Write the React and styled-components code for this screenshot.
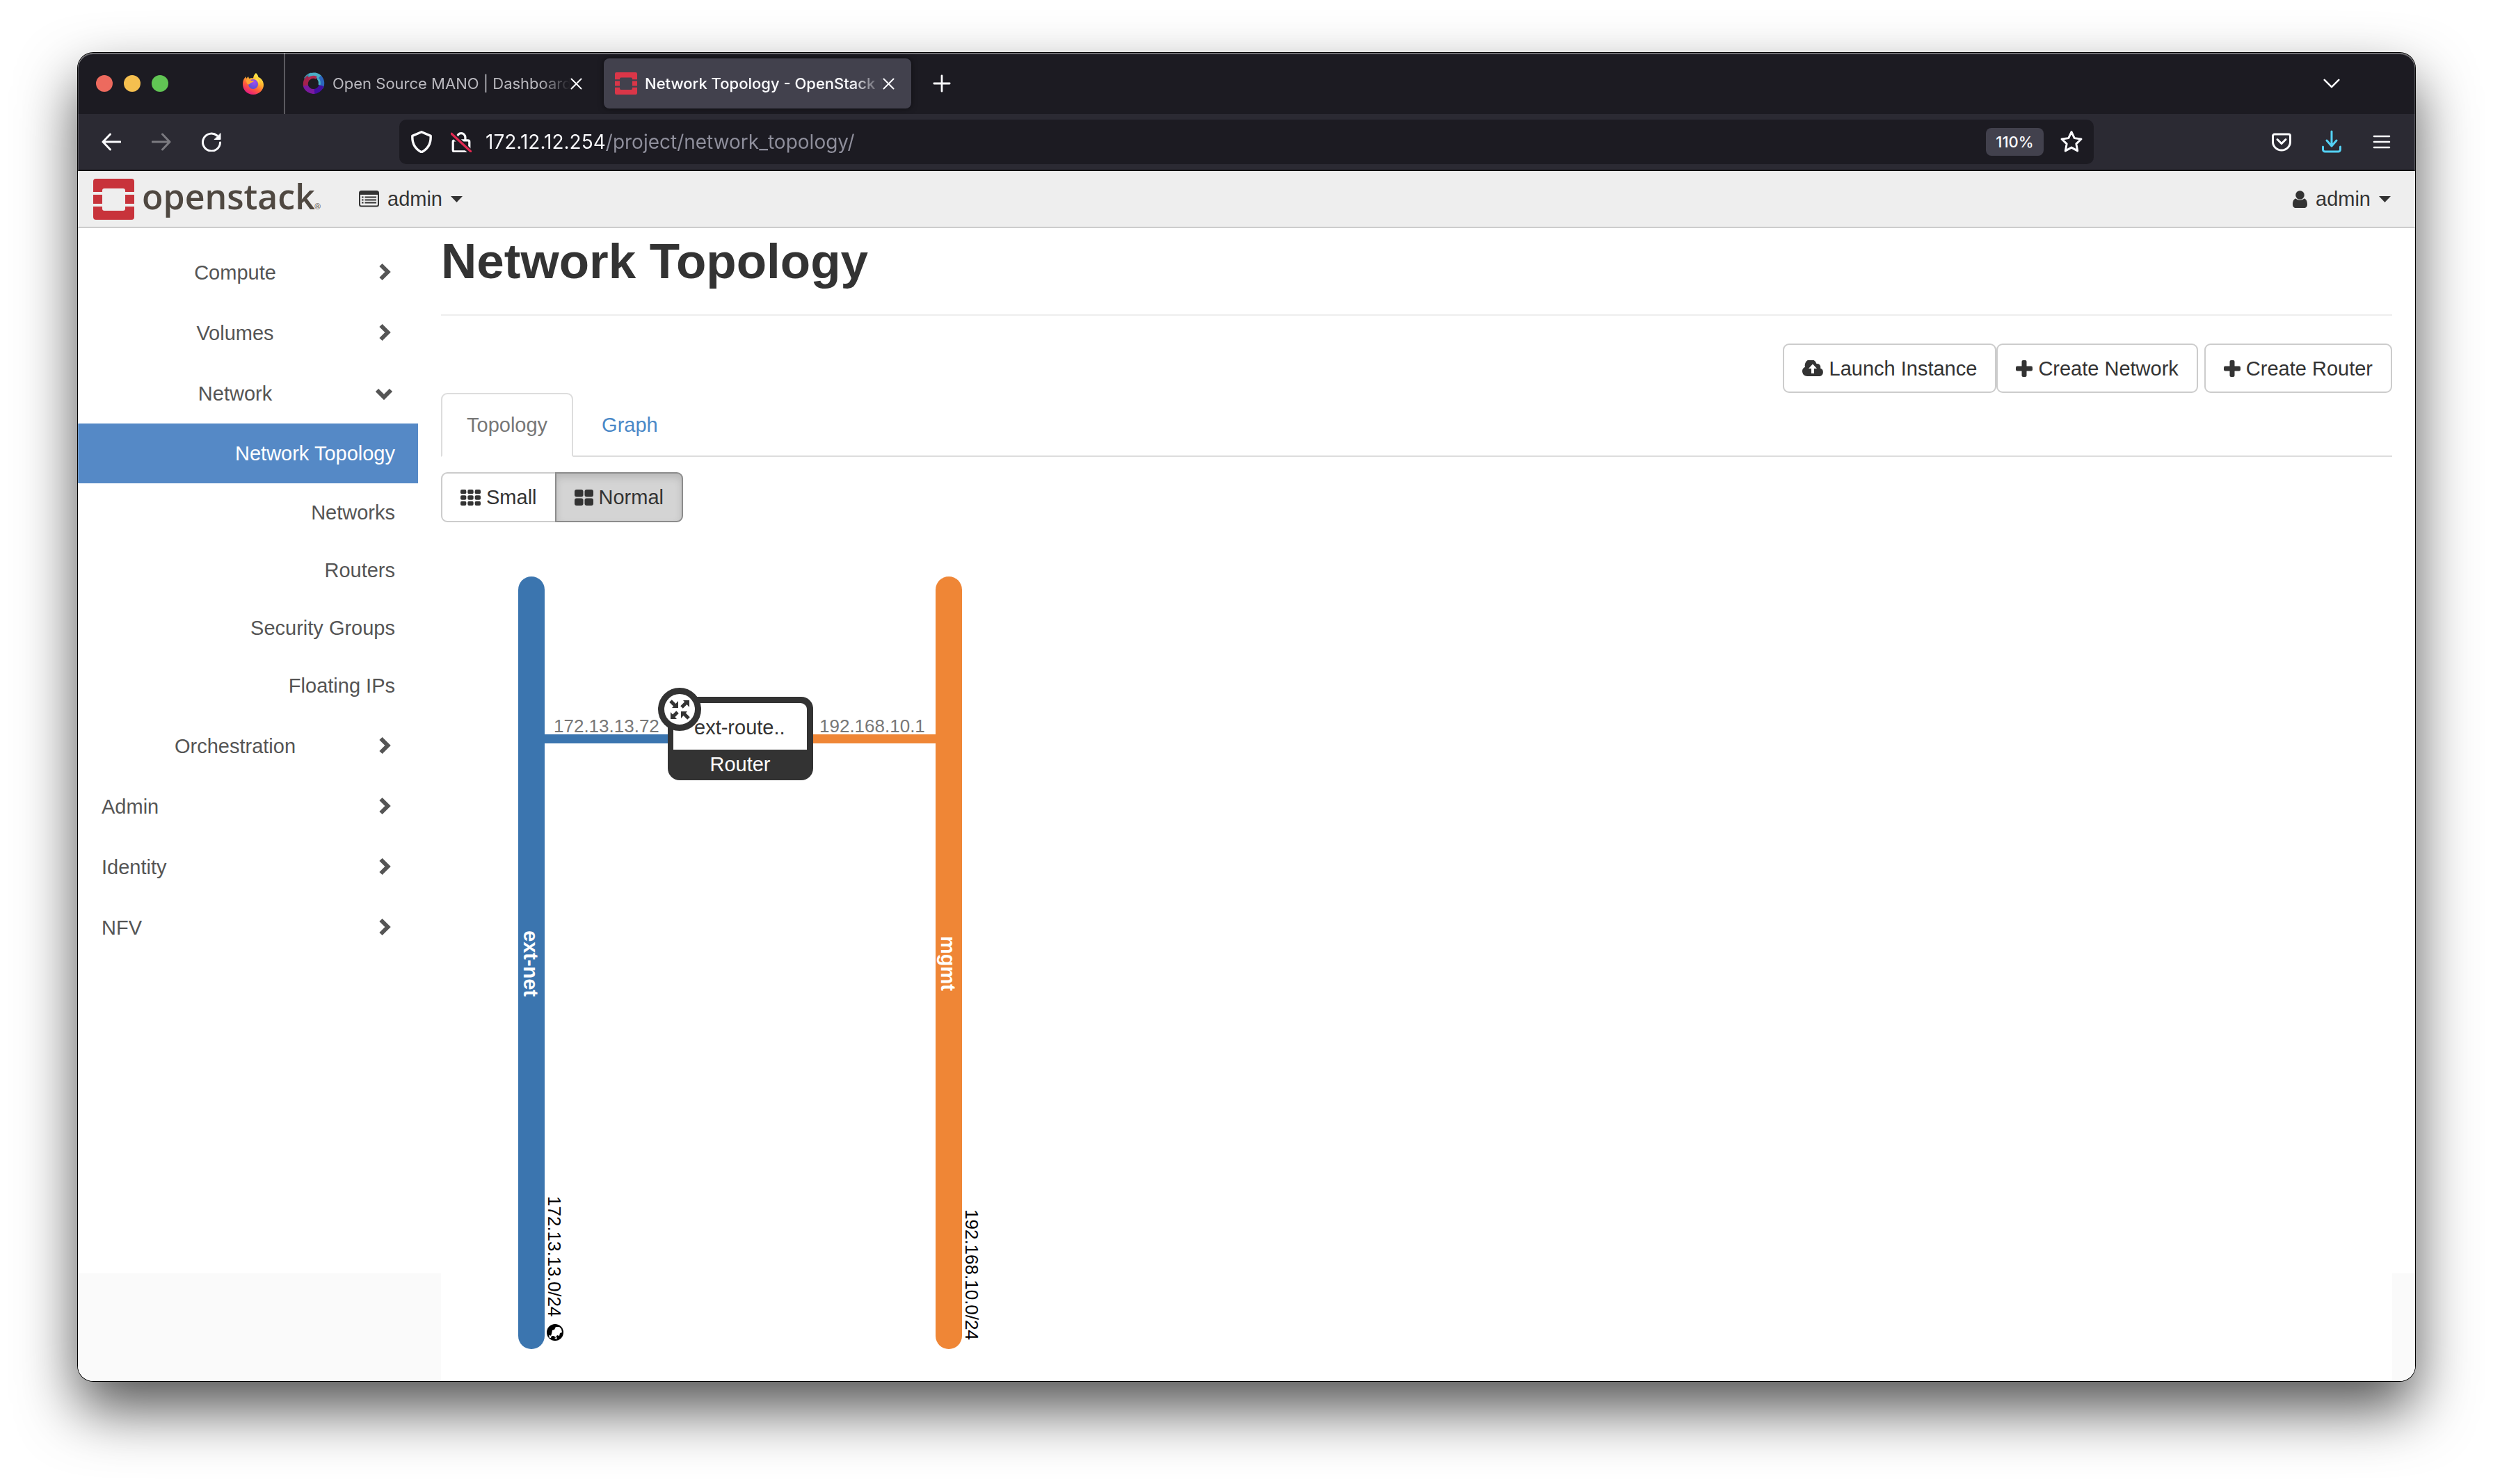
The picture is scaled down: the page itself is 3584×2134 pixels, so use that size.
import React from "react";
import styled, { createGlobalStyle, css } from "styled-components";

const GlobalStyle = createGlobalStyle`
  *, *::before, *::after { box-sizing: border-box; }
  body { margin: 0; background: #fff; }
  button, input { font: inherit; color: inherit; }
  a { text-decoration: none; }
  svg { display: block; flex: none; }
`;

const uiFont = `Inter, "Liberation Sans", sans-serif`;
const pageFont = `"Liberation Sans", Helvetica, Arial, sans-serif`;

const Desktop = styled.div`
  min-height: 100vh;
  padding: 76px 112px 148px;
  display: flex;
`;

const Window = styled.div`
  position: relative;
  flex: 1;
  min-width: 0;
  display: flex;
  flex-direction: column;
  border-radius: 22px;
  overflow: hidden;
  background: #fff;
  box-shadow: 0 0 0 1px #000, 0 40px 84px rgba(0, 0, 0, 0.68);
`;

const WindowEdge = styled.div`
  position: absolute;
  inset: 0;
  border-radius: 22px;
  pointer-events: none;
  box-shadow: inset 0 2px 0 rgba(255, 255, 255, 0.28), inset 0 0 0 1px rgba(255, 255, 255, 0.22);
`;

/* ---------- browser chrome ---------- */

const BareButton = styled.button`
  display: flex;
  align-items: center;
  justify-content: center;
  padding: 0;
  border: 0;
  background: none;
`;

const TabStrip = styled.div`
  height: 88px;
  display: flex;
  align-items: center;
  padding: 0 108px 0 26px;
  background: #1c1b22;
  font-family: ${uiFont};
`;

const Lights = styled.div`
  display: flex;
  gap: 16px;
  margin-right: 107px;
`;

const Light = styled(BareButton)`
  width: 24px;
  height: 24px;
  border-radius: 50%;
  background: ${(p) => p.$color};
`;

const StripDivider = styled.div`
  width: 2px;
  align-self: stretch;
  margin: 0 9px 0 29px;
  background: #5b5a60;
`;

const TabList = styled.div`
  display: flex;
  gap: 7px;
  margin-right: 31px;
`;

const BrowserTab = styled.div`
  width: 442px;
  height: 72px;
  display: flex;
  align-items: center;
  padding: 0 24px 0 16px;
  border-radius: 8px;
  font-weight: ${(p) => (p.$active ? 500 : 400)};
  color: ${(p) => (p.$active ? "#fbfbfe" : "#b9b8be")};
  ${(p) =>
    p.$active &&
    css`
      background: #42414d;
      box-shadow: 0 0 8px rgba(0, 0, 0, 0.5);
    `}
`;

const TabTitle = styled.span`
  flex: 1;
  min-width: 0;
  margin-left: 11px;
  overflow: hidden;
  white-space: nowrap;
  font-size: 22px;
  line-height: 32px;
  mask-image: linear-gradient(90deg, #000 calc(100% - 44px), transparent);
`;

const Spacer = styled.div`
  flex: 1;
`;

const NavBar = styled.div`
  height: 82px;
  display: flex;
  align-items: center;
  padding: 0 34px;
  background: #2b2a33;
  border-bottom: 2px solid #0c0c0d;
  font-family: ${uiFont};
`;

const NavGroup = styled.div`
  display: flex;
  align-items: center;
  gap: 44px;
`;

const UrlBar = styled.div`
  flex: 1;
  height: 64px;
  margin: 0 256px;
  padding: 0 16px;
  display: flex;
  align-items: center;
  border-radius: 10px;
  background: #1c1b22;
`;

const UrlIcons = styled.div`
  display: flex;
  align-items: center;
  gap: 26px;
  margin-right: 20px;
`;

const UrlInput = styled.input`
  flex: 1;
  min-width: 0;
  height: 48px;
  padding: 0;
  border: 0;
  outline: 0;
  font-size: 28px;
  font-weight: 400;
  color: #fbfbfe;
  -webkit-text-fill-color: transparent;
  background: linear-gradient(90deg, #fbfbfe 174px, #8f8f9c 174px);
  background-clip: text;
  -webkit-background-clip: text;
`;

const ZoomBadge = styled(BareButton)`
  width: 83px;
  height: 40px;
  margin-right: 24px;
  border-radius: 8px;
  background: #42414d;
  color: #fbfbfe;
  font-size: 22px;
  font-weight: 500;
`;

/* ---------- dashboard ---------- */

const Dashboard = styled.div`
  flex: 1;
  display: flex;
  flex-direction: column;
  font-family: ${pageFont};
  font-size: 29px;
  line-height: 40px;
  color: #333;
`;

const TopBar = styled.header`
  height: 82px;
  display: flex;
  align-items: center;
  padding: 0 35px 0 22px;
  background: #eee;
  border-bottom: 2px solid #ccc;
`;

const Brand = styled.a`
  display: flex;
  margin-right: 52px;
`;

const MenuButton = styled(BareButton)`
  gap: 12px;
`;

const Body = styled.div`
  flex: 1;
  display: flex;
  padding-right: 33px;
  background: linear-gradient(#fff calc(100% - 155px), #fafafa 0);
`;

const Sidebar = styled.nav`
  width: 522px;
  flex: none;
  padding: 20px 33px 0 0;
`;

const GroupButton = styled(BareButton)`
  width: 100%;
  height: 87px;
  padding: 0 33px 0 34px;
  color: #555;
  text-align: ${(p) => (p.$top ? "left" : "center")};
`;

const GroupLabel = styled.span`
  flex: 1;
  padding-right: ${(p) => (p.$top ? "0" : "10px")};
`;

const SubList = styled.ul`
  list-style: none;
  margin: 0;
  padding: 0 0 2px;
`;

const SubLink = styled.a`
  height: ${(p) => (p.$active ? 86 : 83)}px;
  display: flex;
  align-items: center;
  justify-content: flex-end;
  padding-right: 33px;
  color: ${(p) => (p.$active ? "#fff" : "#555")};
  background: ${(p) => (p.$active ? "#5589c6" : "transparent")};
`;

const Main = styled.main`
  flex: 1;
  min-width: 0;
  padding-top: 8px;
  background: #fff;
`;

const Title = styled.h1`
  margin: 0;
  padding-bottom: 36px;
  border-bottom: 2px solid #eee;
  font-size: 71px;
  font-weight: 700;
  line-height: 80px;
`;

const Actions = styled.div`
  display: flex;
  justify-content: flex-end;
  margin-top: 40px;
`;

const Button = styled.button`
  height: ${(p) => (p.$group ? 72 : 71)}px;
  display: flex;
  align-items: center;
  gap: 8px;
  padding: 0 26px;
  border: 2px solid #ccc;
  border-radius: 9px;
  background: #fff;
  color: #333;
  line-height: 40px;
  white-space: nowrap;
  ${(p) => p.$spaced && css`margin-left: 9px;`}
  ${(p) => p.$group === "first" && css`border-radius: 9px 0 0 9px;`}
  ${(p) =>
    p.$group === "last" &&
    css`
      margin-left: -2px;
      border-radius: 0 9px 9px 0;
      border-color: #8c8c8c;
      background: #d4d4d4;
      box-shadow: inset 0 6px 11px rgba(0, 0, 0, 0.125);
    `}
`;

const Tabs = styled.div`
  display: flex;
  box-shadow: inset 0 -2px 0 #ddd;
`;

const TabLink = styled.a`
  height: 92px;
  display: flex;
  align-items: center;
  padding: 0 35px;
  border: 2px solid transparent;
  border-radius: 9px 9px 0 0;
  margin-right: 4px;
  color: #4a88c7;
  ${(p) =>
    p.$active &&
    css`
      color: #777;
      background: #fff;
      border-color: #ddd #ddd #fff;
    `}
`;

const SizeToggle = styled.div`
  display: flex;
  margin: 22px 0 25px;
`;

/* ---------- icons ---------- */

const Stroke = ({ size = 28, width = 3, color = "#fbfbfe", children, ...rest }) => (
  <svg width={size} height={size} viewBox="0 0 28 28" fill="none" stroke={color} strokeWidth={width}
    strokeLinecap="round" strokeLinejoin="round" aria-hidden="true" {...rest}>
    {children}
  </svg>
);

const FirefoxIcon = () => (
  <svg width="30" height="32" viewBox="0 0 30 32" aria-hidden="true">
    <defs>
      <linearGradient id="ffBody" x1="0.8" y1="0.1" x2="0.3" y2="1">
        <stop offset="0" stopColor="#fff04a" />
        <stop offset="0.35" stopColor="#ffb02e" />
        <stop offset="0.65" stopColor="#ff5b3a" />
        <stop offset="1" stopColor="#e31587" />
      </linearGradient>
      <radialGradient id="ffGlobe" cx="0.6" cy="0.3" r="0.8">
        <stop offset="0" stopColor="#a04bf0" />
        <stop offset="1" stopColor="#4a52d0" />
      </radialGradient>
    </defs>
    <path d="M19 1c2 2 3 3.500 3.500 6 3.500 1 7.500 5.500 7.500 11C30 25.500 23.500 32 15 32S0 25.500 0 17c0-4 1-6.500 2.500-8.500L4 6l1 3 3-3 1 3c2-1 4-1 6-.500C15.500 5 17 2.500 19 1z" fill="url(#ffBody)" />
    <circle cx="15" cy="17" r="7" fill="url(#ffGlobe)" />
    <path d="M5 11c3-2 6-1 7 1h4c-.5 2-2.500 2.500-4 3-2 .7-2 2.500-4 2.500C6 17 5 14 5 11z" fill="#ffa436" />
    <path d="M20 8c3 2 5 6 3.500 11C23 14 21 12 18 10z" fill="#ffd94a" />
  </svg>
);

const OsmIcon = () => (
  <svg width="32" height="32" viewBox="0 0 32 32" fill="none" strokeWidth="7" aria-hidden="true">
    <path d="M5 10A12 12 0 0 1 13 4" stroke="#3f8fa8" />
    <path d="M10 5.500A12 12 0 0 1 25 8" stroke="#4aafc6" />
    <path d="M24 7A12 12 0 0 1 26 22" stroke="#2c67be" />
    <path d="M27 19A12 12 0 0 1 14 27.500" stroke="#430fa0" />
    <path d="M17 27.500A12 12 0 0 1 4 18" stroke="#7a1a9f" />
    <path d="M4.500 19A12 12 0 0 1 9 7.500" stroke="#a6224c" />
    <path d="M9 9.500A10 10 0 0 1 20 8" stroke="#b02a4e" strokeWidth="4" />
    <path d="M22 9A10 10 0 0 1 24 18" stroke="#4aafc6" strokeWidth="3" />
  </svg>
);

const OpenStackMark = ({ size, color }) => (
  <svg width={size} height={size} viewBox="0 0 59 59" fill={color} aria-hidden="true">
    <path d="M4 0h51a4 4 0 0 1 4 4v15H46v-2a3 3 0 0 0-3-3H16a3 3 0 0 0-3 3v2H0V4a4 4 0 0 1 4-4z" />
    <path d="M0 23h13v13H0zM46 23h13v13H46z" />
    <path d="M0 40h13v3a3 3 0 0 0 3 3h27a3 3 0 0 0 3-3v-3h13v15a4 4 0 0 1-4 4H4a4 4 0 0 1-4-4z" />
  </svg>
);

const BrandLogo = () => (
  <svg width="330" height="80" viewBox="0 0 330 80" role="img" aria-label="openstack">
    <g transform="translate(0 11)">
      <OpenStackMark size={59} color="#c8333b" />
    </g>
    <text x="70" y="55" fontFamily='"Open Sans", sans-serif' fontWeight="600" fontSize="50" fill="#4f4841">openstack</text>
    <text x="318" y="55" fontFamily='"Open Sans", sans-serif' fontSize="11" fill="#4f4841">®</text>
  </svg>
);

const CloseIcon = () => (
  <svg width="17" height="17" viewBox="0 0 17 17" stroke="#fbfbfe" strokeWidth="2" strokeLinecap="round" aria-hidden="true">
    <path d="M1.500 1.500l14 14M15.500 1.500l-14 14" />
  </svg>
);

const Chevron = ({ down }) => (
  <svg width="28" height="28" viewBox="0 0 28 28" fill="none" stroke="#555" strokeWidth="6" aria-hidden="true">
    <path d={down ? "M2 9l10 10L22 9" : "M7.500 3l10 10-10 10"} />
  </svg>
);

const Caret = () => (
  <svg width="17" height="9" viewBox="0 0 17 9" fill="#333" aria-hidden="true">
    <path d="M0 0h17L8.500 9z" />
  </svg>
);

const ListIcon = () => (
  <svg width="29" height="24" viewBox="0 0 29 24" aria-hidden="true">
    <rect x="1" y="1" width="27" height="21.500" rx="2.500" fill="none" stroke="#333" strokeWidth="2" />
    <path d="M1 1h27v5H1z" fill="#333" />
    <path d="M4 9.500h2.500M4 13.500h2.500M4 17.500h2.500M8.500 9.500H25M8.500 13.500H25M8.500 17.500H25" stroke="#333" strokeWidth="2" />
  </svg>
);

const UserIcon = () => (
  <svg width="21" height="25" viewBox="0 0 21 25" fill="#333" aria-hidden="true">
    <circle cx="10.500" cy="6.500" r="6.300" />
    <path d="M4.500 11.500C1.500 12 0 15.500 0 20c0 3 2 5 4.500 5h12c2.500 0 4.500-2 4.500-5 0-4.500-1.500-8-4.500-8.500-3.500 3-8.500 3-12 0z" />
  </svg>
);

const CloudUploadIcon = () => (
  <svg width="31" height="23" viewBox="0 0 31 23" aria-hidden="true">
    <path d="M7 23a7 7 0 0 1-3-13.300A8.500 8.500 0 0 1 20.500 5a5 5 0 0 1 5.500 6.500A6 6 0 0 1 25 23z" fill="#333" />
    <path d="M15 5.500l6 6.500h-4v7h-4v-7H9z" fill="#fff" />
  </svg>
);

const PlusIcon = () => (
  <svg width="24" height="24" viewBox="0 0 24 24" fill="#333" aria-hidden="true">
    <rect x="8.500" y="0" width="7" height="24" rx="2" />
    <rect x="0" y="8.500" width="24" height="7" rx="2" />
  </svg>
);

const GridIcon = ({ n }) => {
  const w = n === 3 ? 29 : 27;
  const h = 23;
  const gap = 2;
  const cw = (w - gap * (n - 1)) / n;
  const ch = (h - gap * (n - 1)) / n;
  const cells = [];
  for (let r = 0; r < n; r++)
    for (let c = 0; c < n; c++)
      cells.push(<rect key={`${r}${c}`} x={c * (cw + gap)} y={r * (ch + gap)} width={cw} height={ch} rx={n === 3 ? 2 : 3} />);
  return (
    <svg width={w} height={h} viewBox={`0 0 ${w} ${h}`} fill="#333" aria-hidden="true">
      {cells}
    </svg>
  );
};

/* ---------- topology ---------- */

const Canvas = styled.svg`
  font-family: ${pageFont};
`;

const networks = [
  { name: "ext-net", color: "#3b75af", x: 111, nameY: 562, cidr: "172.13.13.0/24", cidrY: 944, external: true },
  { name: "mgmt", color: "#ef8636", x: 711, nameY: 570, cidr: "192.168.10.0/24", cidrY: 963 },
];

const Topology = () => (
  <Canvas width="1100" height="1185" viewBox="0 0 1100 1185" role="img" aria-label="Network topology">
    {networks.map((n) => (
      <g key={n.name}>
        <rect x={n.x} y="53" width="38" height="1111" rx="19" fill={n.color} />
        <text transform={`translate(${n.x + 8} ${n.nameY}) rotate(90)`} fontSize="29" fontWeight="700" fill="#fff">{n.name}</text>
        <text transform={`translate(${n.x + 43} ${n.cidrY}) rotate(90)`} fontSize="26" fill="#000">{n.cidr}</text>
        {n.external && (
          <g transform="translate(164 1140)">
            <circle r="12" fill="#000" />
            <path d="M-4-3l3-1 2-4 5 0 3 3 1 5-3 1-1 4-3-1-2 3-3-2-4 0 1-3z" fill="#fff" />
            <path d="M-9 4l4 1-1 3-2 0zM-1 8l4-1-1 3z" fill="#fff" />
          </g>
        )}
      </g>
    ))}
    <rect x="148" y="280" width="179" height="13" fill="#3b75af" />
    <rect x="534" y="280" width="178" height="13" fill="#ef8636" />
    <text x="162" y="277" fontSize="26" fill="#777">172.13.13.72</text>
    <text x="544" y="277" fontSize="26" fill="#777">192.168.10.1</text>
    <rect x="326" y="226" width="209" height="120" rx="17" fill="#333" />
    <path d="M334 235h183a9 9 0 0 1 9 9v58H334z" fill="#fff" />
    <text x="430" y="333" textAnchor="middle" fontSize="29" fill="#fff">Router</text>
    <g transform="translate(343 244)">
      <circle r="26.500" fill="#fff" stroke="#333" strokeWidth="9" />
      <g fill="#333">
        <path d="M14-13v10l-9-10z M-2-2v-10l-9 10z M2 3v10l9-10z M-13 14v-10l9 10z" />
      </g>
      <path d="M3-3l7-7M-13-12l7 7M-3 4l-7 7M13 13l-7-7" stroke="#333" strokeWidth="5" />
    </g>
    <text x="364" y="280" fontSize="29" fill="#333">ext-route..</text>
  </Canvas>
);

const subItems = ["Network Topology", "Networks", "Routers", "Security Groups", "Floating IPs"];

const Group = ({ label, top, open }) => (
  <GroupButton type="button" $top={top} aria-expanded={!!open}>
    <GroupLabel $top={top}>{label}</GroupLabel>
    <Chevron down={open} />
  </GroupButton>
);

export default function App() {
  return (
    <>
      <GlobalStyle />
      <Desktop>
        <Window>
          <TabStrip>
            <Lights>
              <Light $color="#ed6a5e" aria-label="Close window" />
              <Light $color="#f5bf4f" aria-label="Minimize window" />
              <Light $color="#61c554" aria-label="Zoom window" />
            </Lights>
            <FirefoxIcon />
            <StripDivider />
            <TabList>
              <BrowserTab>
                <OsmIcon />
                <TabTitle>Open Source MANO | Dashboard</TabTitle>
                <BareButton aria-label="Close tab"><CloseIcon /></BareButton>
              </BrowserTab>
              <BrowserTab $active>
                <OpenStackMark size={32} color="#da3648" />
                <TabTitle>Network Topology - OpenStack Dashboard</TabTitle>
                <BareButton aria-label="Close tab"><CloseIcon /></BareButton>
              </BrowserTab>
            </TabList>
            <BareButton aria-label="New tab">
              <Stroke size={26}><path d="M14 2v24M2 14h24" /></Stroke>
            </BareButton>
            <Spacer />
            <BareButton aria-label="List all tabs">
              <Stroke size={24}><path d="M2 8l12 12L26 8" /></Stroke>
            </BareButton>
          </TabStrip>

          <NavBar>
            <NavGroup>
              <BareButton aria-label="Back"><Stroke><path d="M27 14H2M12.500 3L2 14l10.500 11" /></Stroke></BareButton>
              <BareButton aria-label="Forward"><Stroke color="#7b7a80"><path d="M1 14h25M15.500 3L26 14 15.500 25" /></Stroke></BareButton>
              <BareButton aria-label="Reload">
                <Stroke>
                  <path d="M26.500 15A12.500 12.500 0 1 1 22 5" />
                  <path d="M27 2v8.500h-8.500z" fill="#fbfbfe" strokeWidth="1" />
                </Stroke>
              </BareButton>
            </NavGroup>
            <UrlBar>
              <UrlIcons>
                <Stroke size={32}><path d="M14 1.500L2.500 6.500C2 16 6 23 14 27c8-4 12-11 11.500-20.500z" /></Stroke>
                <Stroke size={30}>
                  <path d="M8.500 12V8a5.500 5.500 0 0 1 11 0v4M5 12h18a2 2 0 0 1 2 2v11a2 2 0 0 1-2 2H5a2 2 0 0 1-2-2V14a2 2 0 0 1 2-2z" />
                  <path d="M1 3l25 24" stroke="#1c1b22" strokeWidth="7" />
                  <path d="M1 3l26 24" stroke="#e22850" />
                </Stroke>
              </UrlIcons>
              <UrlInput type="text" aria-label="Address" defaultValue="172.12.12.254/project/network_topology/" />
              <ZoomBadge>110%</ZoomBadge>
              <BareButton aria-label="Bookmark this page">
                <Stroke size={32} width={2.6}>
                  <path d="M14 1.500l3.700 7.800 8.500 1.200-6.200 6 1.600 8.800L14 21.100l-7.600 4.200L8 16.500l-6.200-6 8.500-1.200z" />
                </Stroke>
              </BareButton>
            </UrlBar>
            <NavGroup>
              <BareButton aria-label="Save to Pocket">
                <Stroke><path d="M4 3h20a2.500 2.500 0 0 1 2.500 2.500V14a12.500 12 0 0 1-25 0V5.500A2.500 2.500 0 0 1 4 3zM8 10.500l6 6 6-6" /></Stroke>
              </BareButton>
              <BareButton aria-label="Downloads">
                <Stroke color="#54d1f5" style={{ overflow: "visible" }}><path d="M14-1v20M7 12l7 8 7-8M1.500 21v4a3 3 0 0 0 3 3h19a3 3 0 0 0 3-3v-4" /></Stroke>
              </BareButton>
              <BareButton aria-label="Open application menu">
                <Stroke width={2.5}><path d="M3 6h22M3 14h22M3 22h22" /></Stroke>
              </BareButton>
            </NavGroup>
          </NavBar>

          <Dashboard>
            <TopBar>
              <Brand href="#home"><BrandLogo /></Brand>
              <MenuButton type="button"><ListIcon />admin<Caret /></MenuButton>
              <Spacer />
              <MenuButton type="button"><UserIcon />admin<Caret /></MenuButton>
            </TopBar>
            <Body>
              <Sidebar>
                <Group label="Compute" />
                <Group label="Volumes" />
                <Group label="Network" open />
                <SubList>
                  {subItems.map((item, i) => (
                    <li key={item}>
                      <SubLink href={`#${item}`} $active={i === 0}>{item}</SubLink>
                    </li>
                  ))}
                </SubList>
                <Group label="Orchestration" />
                <Group label="Admin" top />
                <Group label="Identity" top />
                <Group label="NFV" top />
              </Sidebar>
              <Main>
                <Title>Network Topology</Title>
                <Actions>
                  <Button type="button"><CloudUploadIcon />Launch Instance</Button>
                  <Button type="button"><PlusIcon />Create Network</Button>
                  <Button type="button" $spaced><PlusIcon />Create Router</Button>
                </Actions>
                <Tabs>
                  <TabLink href="#topology" $active>Topology</TabLink>
                  <TabLink href="#graph">Graph</TabLink>
                </Tabs>
                <SizeToggle>
                  <Button type="button" $group="first"><GridIcon n={3} />Small</Button>
                  <Button type="button" $group="last" aria-pressed="true"><GridIcon n={2} />Normal</Button>
                </SizeToggle>
                <Topology />
              </Main>
            </Body>
          </Dashboard>
          <WindowEdge />
        </Window>
      </Desktop>
    </>
  );
}
